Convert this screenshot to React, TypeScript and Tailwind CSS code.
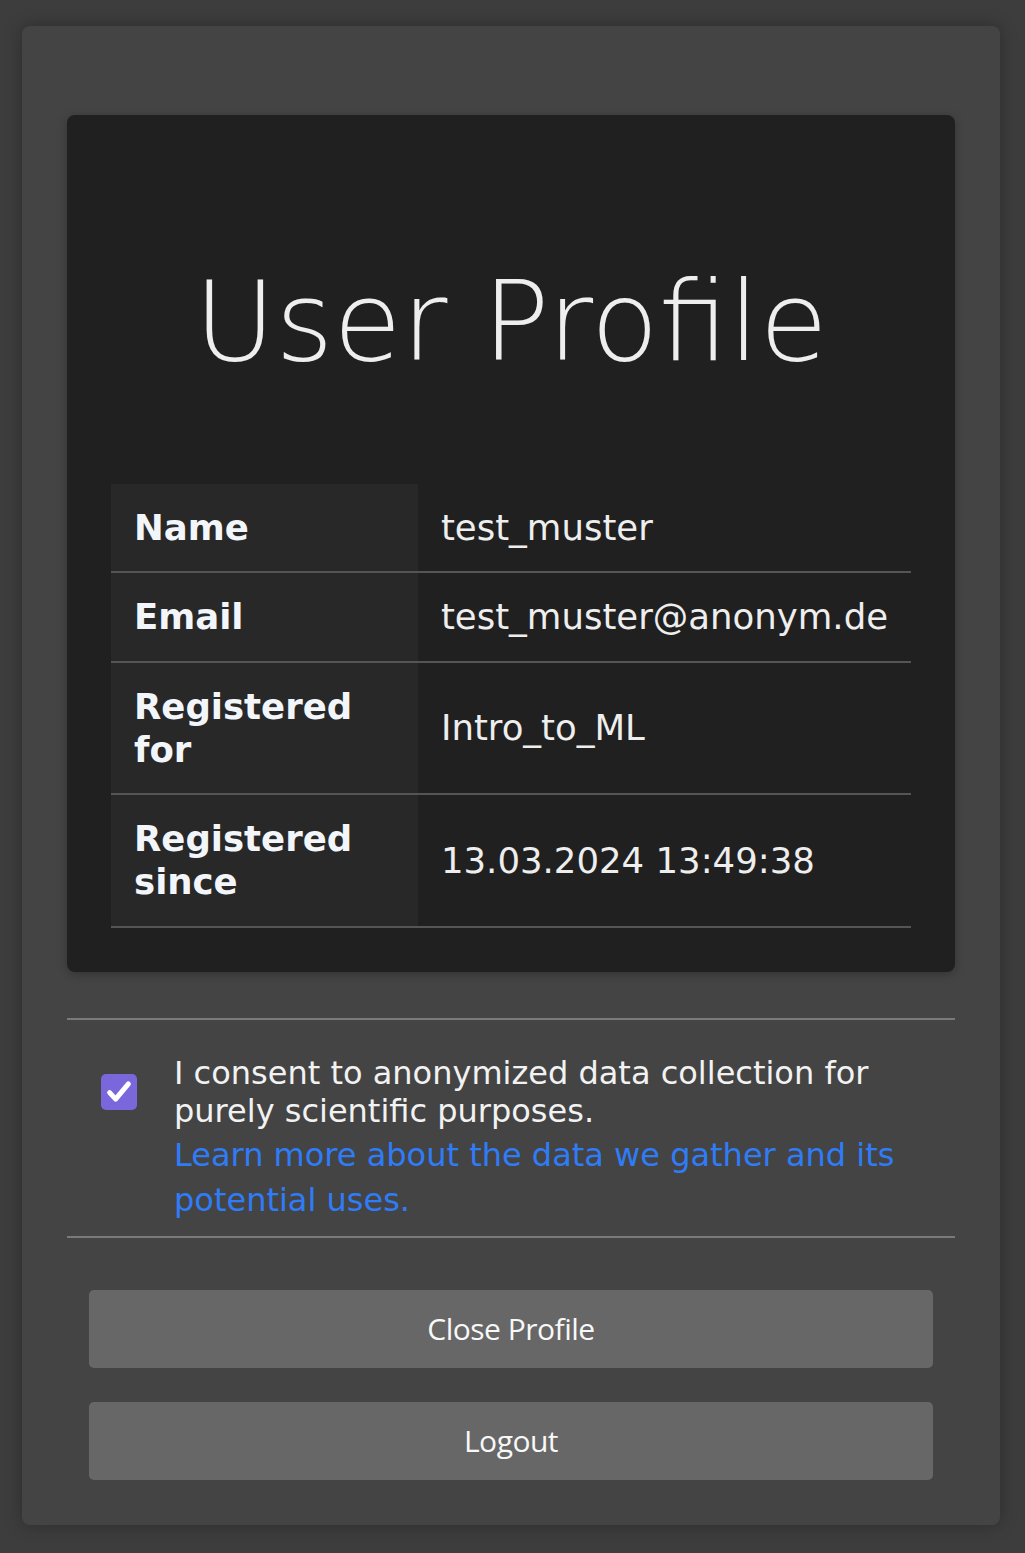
import React from "react";

const rows: { label: string; value: string }[] = [
  { label: "Name", value: "test_muster" },
  { label: "Email", value: "test_muster@anonym.de" },
  { label: "Registered for", value: "Intro_to_ML" },
  { label: "Registered since", value: "13.03.2024 13:49:38" },
];

export default function App() {
  return (
    <div
      className="min-h-screen bg-[#3d3d3d] pt-[26px] pb-[28px] pl-[22px] pr-[25px]"
      style={{ fontFamily: "'DejaVu Sans', 'Liberation Sans', sans-serif" }}
    >
      <div className="bg-[#444444] rounded-[8px] shadow-[0_0_18px_rgba(0,0,0,0.28)] px-[45px] pt-[89px] pb-[45px]">
        <div className="bg-[#202020] rounded-[8px] shadow-[0_2px_10px_rgba(0,0,0,0.25)] p-[44px]">
          <h1 className="text-center text-[111px] leading-[134px] font-extralight text-[#eeeeee] mt-[96px] mb-[95px]">
            User Profile
          </h1>
          <table className="w-full border-collapse text-[35.5px] leading-[43.3px]">
            <tbody>
              {rows.map((r) => (
                <tr key={r.label} className="border-b-2 border-[#555555]">
                  <th className="w-[307px] bg-[#282828] text-left font-bold text-[#f2f6fa] pl-[23px] pr-[24px] py-[22px] align-middle">
                    {r.label}
                  </th>
                  <td className="text-left text-[#eeeeee] px-[23px] py-[22px] align-middle">
                    {r.value}
                  </td>
                </tr>
              ))}
            </tbody>
          </table>
        </div>

        <div className="mt-[46px] border-t-2 border-b-2 border-[#7a7a7a] pt-[34px] pb-[13px] pl-[34px] pr-[20px]">
          <div className="flex items-center">
            <div className="w-[36px] h-[36px] shrink-0 rounded-[5px] bg-[#7a67dc] flex items-center justify-center">
              <svg width="30" height="30" viewBox="0 0 24 24" fill="none">
                <path
                  d="M4.5 12.5l4.8 5.2L19.5 5.5"
                  stroke="white"
                  strokeWidth="4"
                  strokeLinecap="round"
                  strokeLinejoin="round"
                />
              </svg>
            </div>
            <p className="ml-[37px] text-[32px] leading-[38px] text-[#f2f2f2]">
              I consent to anonymized data collection for purely scientific purposes.
            </p>
          </div>
          <a
            href="#"
            className="block mt-[3px] ml-[73px] text-[32px] leading-[45px] text-[#2f7cf6]"
          >
            Learn more about the data we gather and its potential uses.
          </a>
        </div>

        <div
          className="mt-[52px] px-[22px] flex flex-col gap-[34px]"
          style={{ fontFamily: "'Open Sans', 'DejaVu Sans', sans-serif" }}
        >
          <button className="h-[78px] w-full rounded-[5px] bg-[#676767] text-[30px] tracking-[-0.5px] text-[#f8f8f8]">
            Close Profile
          </button>
          <button className="h-[78px] w-full rounded-[5px] bg-[#676767] text-[30px] tracking-[-0.5px] text-[#f8f8f8]">
            Logout
          </button>
        </div>
      </div>
    </div>
  );
}
